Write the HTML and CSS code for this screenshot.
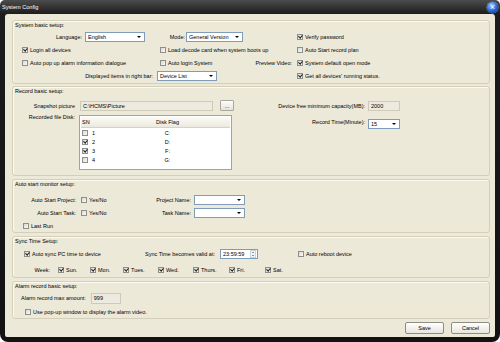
FILE: index.html
```html
<!DOCTYPE html>
<html lang="en">
  <head>
    <meta charset="UTF-8" />
    <meta name="viewport" content="width=device-width, initial-scale=1.0" />
    <title>System Config</title>
    <link rel="stylesheet" href="styles.css">
  </head>
  <body>
    <div class="window">
      <div class="titlebar">
        <span class="title">System Config</span>
        <span class="close-btn">&times;</span>
      </div>

      <div class="client">
        <!-- System basic setup -->
        <div class="group basic">
          <div class="legend">System basic setup:</div>
          <div class="basic-grid">
            <div class="cell">
              <span class="lbl lang-lbl">Language:</span>
              <div class="select w60"><span>English</span><i class="arrow"></i></div>
            </div>
            <div class="cell">
              <span class="lbl mode-lbl">Mode:</span>
              <div class="select w57"><span>General Version</span><i class="arrow"></i></div>
            </div>
            <label class="cb"><span class="box on"></span>Verify password</label>

            <label class="cb ind7"><span class="box on"></span>Login all devices</label>
            <label class="cb ind3"><span class="box"></span>Load decode card when system boots up</label>
            <label class="cb"><span class="box"></span>Auto Start record plan</label>

            <label class="cb ind7"><span class="box"></span>Auto pop up alarm information dialogue</label>
            <div class="cell split">
              <label class="cb"><span class="box"></span>Auto login System</label>
              <span class="lbl">Preview Video:</span>
            </div>
            <label class="cb"><span class="box on"></span>System default open mode</label>

            <span class="lbl items-lbl">Displayed items in right bar:</span>
            <div class="cell">
              <div class="select w60"><span>Device List</span><i class="arrow"></i></div>
            </div>
            <label class="cb"><span class="box on"></span>Get all devices' running status.</label>
          </div>
        </div>

        <!-- Record basic setup -->
        <div class="group record">
          <div class="legend">Record basic setup:</div>
          <div class="record-grid">
            <span class="lbl rec-lbl">Snapshot picture</span>
            <div class="cell snap">
              <div class="field w133">C:\HCMS\Picture</div>
              <span class="small-btn">...</span>
            </div>
            <span class="lbl cap-lbl">Device free minimum capacity(MB):</span>
            <div class="cell">
              <div class="field w32">2000</div>
            </div>

            <span class="lbl rec-lbl top">Recorded file Disk:</span>
            <div class="cell top">
              <div class="disk-table">
                <div class="disk-head">
                  <span class="sn">SN</span>
                  <span class="flag">Disk Flag</span>
                </div>
                <div class="disk-row">
                  <label class="cb sn"><span class="box"></span>1</label>
                  <span class="flag">C:</span>
                </div>
                <div class="disk-row">
                  <label class="cb sn"><span class="box on"></span>2</label>
                  <span class="flag">D:</span>
                </div>
                <div class="disk-row">
                  <label class="cb sn"><span class="box on"></span>3</label>
                  <span class="flag">F:</span>
                </div>
                <div class="disk-row">
                  <label class="cb sn"><span class="box"></span>4</label>
                  <span class="flag">G:</span>
                </div>
              </div>
            </div>
            <span class="lbl cap-lbl rec-time">Record Time(Minute):</span>
            <div class="cell rec-time">
              <div class="select w32"><span>15</span><i class="arrow"></i></div>
            </div>
          </div>
        </div>

        <!-- Auto start monitor setup -->
        <div class="group auto">
          <div class="legend">Auto start monitor setup:</div>
          <div class="auto-grid">
            <span class="lbl auto-lbl">Auto Start Project:</span>
            <label class="cb ind2"><span class="box"></span>Yes/No</label>
            <span class="lbl name-lbl">Project Name:</span>
            <div class="cell"><div class="select w51"><span></span><i class="arrow"></i></div></div>

            <span class="lbl auto-lbl">Auto Start Task:</span>
            <label class="cb ind2"><span class="box"></span>Yes/No</label>
            <span class="lbl name-lbl">Task Name:</span>
            <div class="cell"><div class="select w51"><span></span><i class="arrow"></i></div></div>

            <label class="cb last-run"><span class="box"></span>Last Run</label>
          </div>
        </div>

        <!-- Sync Time Setup -->
        <div class="group sync">
          <div class="legend">Sync Time Setup:</div>
          <div class="sync-row">
            <label class="cb sync-cb"><span class="box on"></span>Auto sync PC time to device</label>
            <span class="lbl valid-lbl">Sync Time becomes valid at:</span>
            <div class="time-field">
              <span>23:59:59</span>
              <span class="spin"><i class="up"></i><i class="down"></i></span>
            </div>
            <label class="cb reboot"><span class="box"></span>Auto reboot device</label>
          </div>
          <div class="week-row">
            <span class="lbl week-lbl">Week:</span>
            <div class="days">
              <label class="cb"><span class="box on"></span>Sun.</label>
              <label class="cb"><span class="box on"></span>Mon.</label>
              <label class="cb"><span class="box on"></span>Tues.</label>
              <label class="cb"><span class="box on"></span>Wed.</label>
              <label class="cb"><span class="box on"></span>Thurs.</label>
              <label class="cb"><span class="box on"></span>Fri.</label>
              <label class="cb"><span class="box on"></span>Sat.</label>
            </div>
          </div>
        </div>

        <!-- Alarm record basic setup -->
        <div class="group alarm">
          <div class="legend">Alarm record basic setup:</div>
          <div class="alarm-row">
            <span class="lbl alarm-lbl">Alarm record max amount:</span>
            <div class="field w30">999</div>
          </div>
          <div class="alarm-row">
            <label class="cb popup"><span class="box"></span>Use pop-up window to display the alarm video.</label>
          </div>
        </div>

        <div class="actions">
          <button>Save</button>
          <button>Cancel</button>
        </div>
      </div>
    </div>
  </body>
</html>
```

FILE: styles.css
```css
* {
  box-sizing: border-box;
}

body {
  margin: 0;
  background-color: #fff;
  font-family: "Liberation Sans", Arial, sans-serif;
  font-size: 5.5px;
  color: #000;
}

.window {
  width: 500px;
  height: 342px;
  display: flex;
  flex-direction: column;
  padding: 0 5px 5px;
  background: linear-gradient(#4c4c4c 0, #1c1c1c 14px, #121212 100%);
  border-radius: 5px 5px 8px 8px;
}

.titlebar {
  height: 14px;
  flex: none;
  display: flex;
  align-items: center;
  justify-content: space-between;
  margin: 0 -3px;
}

.title {
  color: #fff;
  font-size: 5.6px;
}

.close-btn {
  width: 11px;
  height: 11px;
  border-radius: 50%;
  display: flex;
  align-items: center;
  justify-content: center;
  color: #fff;
  font-size: 9px;
  line-height: 1;
  background: radial-gradient(circle at 40% 30%, #9cc8ff, #2a66d6 55%, #0d3a98);
  box-shadow: 0 0 0 0.5px #6d92d4;
}

.client {
  flex: 1;
  display: flex;
  flex-direction: column;
  padding: 6px 5px 3px 7px;
  background-color: #ece9d8;
  border-radius: 3px 3px 2px 2px;
}

/* group boxes */
.group {
  flex: none;
  padding: 1px 2px 0;
  border: 1px solid #d3cfba;
  border-radius: 3px;
  box-shadow: inset 1px 1px 0 #faf9f2;
}

.legend {
  height: 7px;
  line-height: 7px;
}

.basic {
  height: 64px;
}
.record {
  height: 90px;
  margin-top: 2px;
}
.auto {
  height: 54px;
  margin-top: 3px;
}
.sync {
  height: 42px;
  margin-top: 3px;
}
.alarm {
  height: 38px;
  margin-top: 3px;
}

/* common controls */
.cell {
  display: flex;
  align-items: center;
}

.lbl {
  white-space: nowrap;
  text-align: right;
}

.cb {
  display: flex;
  align-items: center;
  gap: 2px;
  white-space: nowrap;
}

.box {
  position: relative;
  flex: none;
  width: 6px;
  height: 6px;
  border: 1px solid #8e8e8a;
  background: linear-gradient(135deg, #d9d8d0, #fbfbf8);
}

.box.on::after {
  content: "";
  position: absolute;
  left: 1.3px;
  top: -0.2px;
  width: 1.6px;
  height: 3px;
  border: solid #1e1e1e;
  border-width: 0 1px 1px 0;
  transform: rotate(40deg);
}

.select {
  height: 10px;
  display: flex;
  align-items: center;
  justify-content: space-between;
  padding-left: 2px;
  background-color: #fff;
  border: 1px solid #7f9db9;
}

.arrow {
  width: 0;
  height: 0;
  margin-right: 3px;
  border-left: 2px solid transparent;
  border-right: 2px solid transparent;
  border-top: 2.5px solid #000;
}

.field {
  height: 10px;
  display: flex;
  align-items: center;
  padding-left: 2px;
  background-color: #edebdf;
  border: 1px solid #cdcab8;
}

.w30 { width: 30px; height: 11px; }
.w32 { width: 32px; }
.w51 { width: 51px; }
.w57 { width: 57px; }
.w60 { width: 60px; }
.w133 { width: 133px; }

.ind2 { padding-left: 2px; }
.ind3 { padding-left: 3px; }
.ind7 { padding-left: 7px; }

/* system basic setup */
.basic-grid {
  display: grid;
  grid-template-columns: 142px 140px 1fr;
  grid-auto-rows: 13px;
  align-items: center;
  margin-top: 1px;
}

.lang-lbl {
  width: 70px;
  padding-right: 3px;
}

.mode-lbl {
  width: 29px;
  padding-right: 1px;
}

.split {
  justify-content: space-between;
  padding: 0 5px 0 3px;
}

.items-lbl {
  padding-right: 4px;
}

/* record basic setup */
.record-grid {
  display: grid;
  grid-template-columns: 62px 165px 126px 1fr;
  grid-template-rows: 13px auto;
  align-items: center;
  margin-top: 4px;
}

.rec-lbl {
  padding-right: 2px;
}

.cap-lbl {
  padding-right: 3px;
}

.snap {
  gap: 7px;
  padding-left: 3px;
}

.small-btn {
  width: 14px;
  height: 11px;
  display: flex;
  align-items: center;
  justify-content: center;
  border: 1px solid #a9a89f;
  border-radius: 1px;
  background: linear-gradient(#fdfdfb, #e4e2d8);
}

.top {
  align-self: start;
  padding-top: 2px;
}

.rec-time {
  align-self: start;
  padding-top: 7px;
}

.disk-table {
  width: 153px;
  height: 55px;
  margin: 1px 0 0 2px;
  background-color: #fff;
  border: 1px solid #8fa6bd;
}

.disk-head,
.disk-row {
  display: grid;
  grid-template-columns: 24px 1fr;
  align-items: center;
  margin: 0 1px;
}

.disk-head {
  height: 11px;
  margin-top: 1px;
  background: linear-gradient(#fbfaf6, #ebe9de);
  border-bottom: 1px solid #d6d3c4;
}

.disk-row {
  height: 9px;
}

.sn {
  padding-left: 1px;
}

.disk-row .sn {
  gap: 4px;
}

.flag {
  text-align: center;
}

/* auto start monitor setup */
.auto-grid {
  display: grid;
  grid-template-columns: 64px 60px 54px 1fr;
  grid-auto-rows: 13px;
  align-items: center;
  margin-top: 5px;
}

.auto-lbl {
  padding-right: 3px;
}

.name-lbl {
  padding-right: 2px;
}

.name-lbl + .cell {
  padding-left: 1px;
}

.last-run {
  grid-column: 1 / -1;
  padding-left: 8px;
}

/* sync time setup */
.sync-row,
.week-row,
.alarm-row {
  display: flex;
  align-items: center;
  height: 13px;
}

.sync-row {
  margin-top: 2px;
}

.week-row {
  margin-top: 3px;
}

.sync-cb {
  width: 120px;
  padding-left: 9px;
}

.valid-lbl {
  width: 85px;
  padding-right: 5px;
}

.time-field {
  width: 38px;
  height: 10px;
  display: flex;
  align-items: center;
  justify-content: space-between;
  padding-left: 2px;
  background-color: #fff;
  border: 1px solid #7f9db9;
}

.spin {
  width: 6px;
  height: 8px;
  display: flex;
  flex-direction: column;
  align-items: center;
  justify-content: space-around;
  margin-right: 1px;
  border: 1px solid #c9d3e0;
  background-color: #f1f4f9;
}

.spin i {
  width: 0;
  height: 0;
  border-left: 1.5px solid transparent;
  border-right: 1.5px solid transparent;
}

.spin .up {
  border-bottom: 1.5px solid #333;
}

.spin .down {
  border-top: 1.5px solid #333;
}

.reboot {
  margin-left: 40px;
}

.week-lbl {
  width: 35px;
  margin-right: 8px;
}

.days {
  display: grid;
  grid-template-columns: 32px 33px 35px 35px 36px 36px auto;
  align-items: center;
}

/* alarm record basic setup */
.alarm-row {
  height: 12px;
  margin-top: 2px;
}

.alarm-lbl {
  padding-left: 6px;
  margin-right: 5px;
}

.popup {
  padding-left: 10px;
}

/* bottom buttons */
.actions {
  height: 12px;
  margin-top: 3px;
  display: flex;
  justify-content: flex-end;
  gap: 7px;
}

.actions button {
  width: 39px;
  height: 12px;
  padding: 0;
  font-family: inherit;
  font-size: 5.5px;
  color: #000;
  border: 1px solid #8d8d88;
  border-radius: 2px;
  background: linear-gradient(#ffffff, #e6e5de);
}
```
